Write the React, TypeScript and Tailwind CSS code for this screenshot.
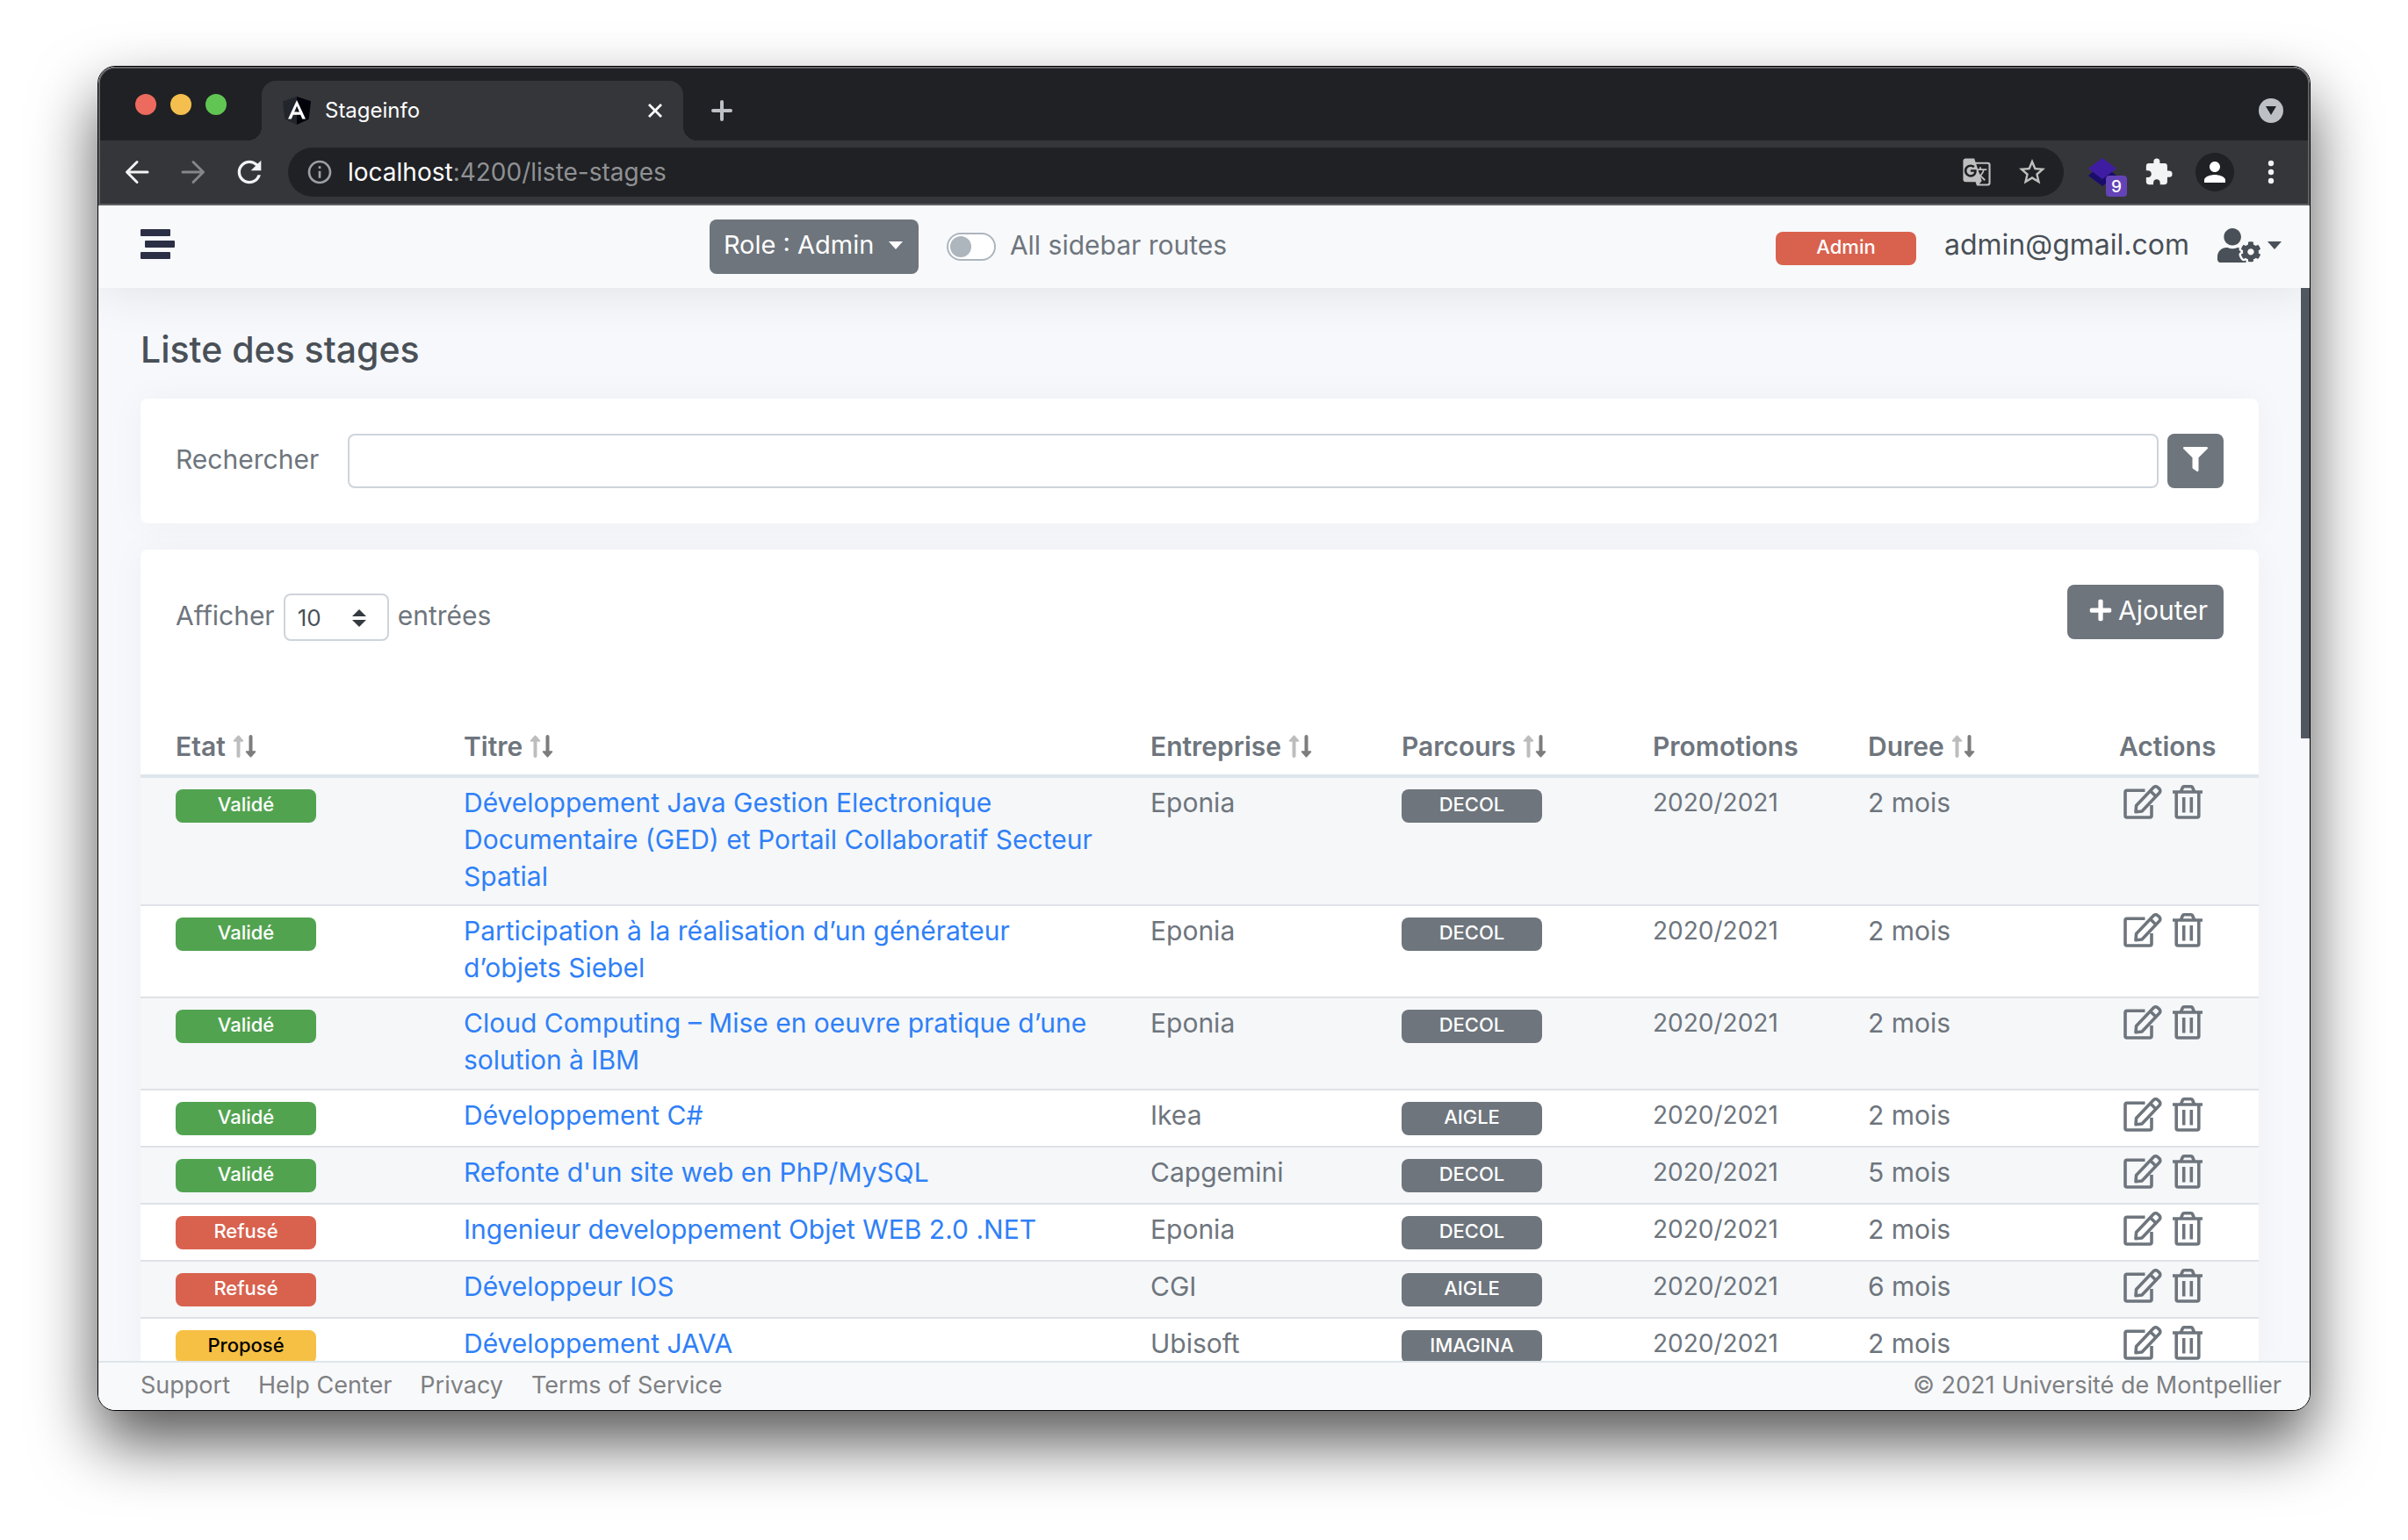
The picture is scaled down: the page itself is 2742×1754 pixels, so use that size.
import { useState } from "react";
import { FaFilter, FaPlus, FaUserCog } from "react-icons/fa";
import {
  MdExtension,
  MdGTranslate,
  MdInfoOutline,
  MdPerson,
  MdRefresh,
  MdStarBorder,
} from "react-icons/md";

type Etat = "Validé" | "Refusé" | "Proposé";

interface Stage {
  etat: Etat;
  titre: string;
  entreprise: string;
  parcours: string;
  duree: string;
  height: string;
}

const PROMOTION = "2020/2021";

const stages: Stage[] = [
  {
    etat: "Validé",
    titre:
      "Développement Java Gestion Electronique Documentaire (GED) et Portail Collaboratif Secteur Spatial",
    entreprise: "Eponia",
    parcours: "DECOL",
    duree: "2 mois",
    height: "h-[144px]",
  },
  {
    etat: "Validé",
    titre: "Participation à la réalisation d’un générateur d’objets Siebel",
    entreprise: "Eponia",
    parcours: "DECOL",
    duree: "2 mois",
    height: "h-[105px]",
  },
  {
    etat: "Validé",
    titre: "Cloud Computing – Mise en oeuvre pratique d’une solution à IBM",
    entreprise: "Eponia",
    parcours: "DECOL",
    duree: "2 mois",
    height: "h-[105px]",
  },
  { etat: "Validé", titre: "Développement C#", entreprise: "Ikea", parcours: "AIGLE", duree: "2 mois", height: "h-[65px]" },
  { etat: "Validé", titre: "Refonte d'un site web en PhP/MySQL", entreprise: "Capgemini", parcours: "DECOL", duree: "5 mois", height: "h-[65px]" },
  { etat: "Refusé", titre: "Ingenieur developpement Objet WEB 2.0 .NET", entreprise: "Eponia", parcours: "DECOL", duree: "2 mois", height: "h-[65px]" },
  { etat: "Refusé", titre: "Développeur IOS", entreprise: "CGI", parcours: "AIGLE", duree: "6 mois", height: "h-[65px]" },
  { etat: "Proposé", titre: "Développement JAVA", entreprise: "Ubisoft", parcours: "IMAGINA", duree: "2 mois", height: "h-[65px]" },
];

const etatColors: Record<Etat, string> = {
  Validé: "bg-[#52a350] text-white",
  Refusé: "bg-[#d9624e] text-white",
  Proposé: "bg-[#f6c044] text-black",
};

const columns = [
  { label: "Etat", sortable: true },
  { label: "Titre", sortable: true },
  { label: "Entreprise", sortable: true },
  { label: "Parcours", sortable: true },
  { label: "Promotions", sortable: false },
  { label: "Duree", sortable: true },
  { label: "Actions", sortable: false },
];

function Badge({ color, children }: { color: string; children: string }) {
  return (
    <span
      className={`flex h-[38px] w-40 items-center justify-center rounded-lg pb-1 text-[22px] leading-none font-medium ${color}`}
    >
      {children}
    </span>
  );
}

function Caret() {
  return (
    <svg width="16" height="9" viewBox="0 0 16 9" aria-hidden="true">
      <path d="M0 0h16L8 9z" fill="currentColor" />
    </svg>
  );
}

function SortArrows() {
  return (
    <svg width="27" height="26" viewBox="0 0 27 26" fill="none" strokeLinecap="round" strokeLinejoin="round" aria-hidden="true">
      <path d="M6.5 24V5" stroke="#bdbdbd" strokeWidth="4" />
      <path d="M6.500 1.500 11.300 6.800H1.700z" fill="#bdbdbd" stroke="#bdbdbd" strokeWidth="2" />
      <path d="M20.500 2v19" stroke="#7d7d7d" strokeWidth="4" />
      <path d="M20.500 24.500 15.700 19.200h9.600z" fill="#7d7d7d" stroke="#7d7d7d" strokeWidth="2" />
    </svg>
  );
}

function EditIcon() {
  return (
    <svg width="44" height="40" viewBox="0 0 44 40" fill="none" stroke="currentColor" strokeWidth="3.600" strokeLinecap="butt" strokeLinejoin="round" aria-hidden="true">
      <path d="M24.500 6.300H4a2 2 0 0 0-2 2V35a2 2 0 0 0 2 2h26a2 2 0 0 0 2-2V23" />
      <path d="M14 30.800l.6-7.300L34.300 2.800a3.300 3.300 0 0 1 4.700-.1l1.800 1.700a3.300 3.300 0 0 1 .1 4.700L21 30z" />
      <path d="M30.500 6.800l6.600 6.400" />
    </svg>
  );
}

function TrashIcon() {
  return (
    <svg width="34" height="40" viewBox="0 0 34 40" fill="none" stroke="currentColor" strokeWidth="3.600" strokeLinejoin="round" aria-hidden="true">
      <path d="M0 8h34" />
      <path d="M9.300 8l2-5a2 2 0 0 1 1.800-1.200h7.800a2 2 0 0 1 1.800 1.200l2 5" />
      <path d="M4.200 8v27a2 2 0 0 0 2 2h21.600a2 2 0 0 0 2-2V8" />
      <path d="M12.700 14v17.500M21.300 14v17.500" />
    </svg>
  );
}

function AngularLogo() {
  return (
    <svg width="32" height="32" viewBox="0 0 32 32" aria-hidden="true">
      <path d="M16 0L0 5.300l2.300 20.400L16 32z" fill="#23252d" />
      <path d="M16 0l16 5.300-2.300 20.400L16 32z" fill="#02030a" />
      <path d="M16 4L6 25.500h3.800l2-4.800h8.400l2 4.800H26L16 4zm0 6.800l2.900 6.800h-5.800z" fill="#fff" fillRule="evenodd" />
    </svg>
  );
}

function TabStrip() {
  return (
    <div className="flex h-[82px] items-center bg-[#202124] pr-7 pl-10">
      <div className="flex gap-4">
        <button aria-label="Close window" className="size-6 rounded-full bg-[#ed6a5e]" />
        <button aria-label="Minimize window" className="size-6 rounded-full bg-[#f5bf4f]" />
        <button aria-label="Zoom window" className="size-6 rounded-full bg-[#61c554]" />
      </div>
      <div className="relative ml-10 flex h-[68px] w-[480px] items-center self-end rounded-t-2xl bg-[#35363a] pr-4 pl-6 text-white">
        <span className="absolute bottom-0 -left-4 size-4 bg-[radial-gradient(circle_at_0_0,transparent_16px,#35363a_16px)]" />
        <span className="absolute -right-4 bottom-0 size-4 bg-[radial-gradient(circle_at_100%_0,transparent_16px,#35363a_16px)]" />
        <AngularLogo />
        <span className="ml-4 flex-1 text-[24px] leading-8">Stageinfo</span>
        <button aria-label="Close tab" className="flex size-8 items-center justify-center">
          <svg width="16" height="16" viewBox="0 0 16 16" stroke="currentColor" strokeWidth="2.800" aria-hidden="true">
            <path d="M1 1l14 14M15 1L1 15" />
          </svg>
        </button>
      </div>
      <button aria-label="New tab" className="ml-5 flex h-[68px] w-12 items-center justify-center self-end text-[#bdc1c6]">
        <svg width="24" height="24" viewBox="0 0 24 24" stroke="currentColor" strokeWidth="4" strokeLinecap="round" aria-hidden="true">
          <path d="M12 2v20M2 12h20" />
        </svg>
      </button>
      <button aria-label="Search tabs" className="ml-auto flex h-[68px] items-center self-end">
        <span className="flex size-7 items-center justify-center rounded-full bg-[#bdc1c6] text-[#202124]">
          <svg width="12" height="10" viewBox="0 0 12 10" aria-hidden="true">
            <path d="M0 0h12L6 10z" fill="currentColor" />
          </svg>
        </span>
      </button>
    </div>
  );
}

function AddressBar() {
  const tool = "flex h-14 w-16 items-center justify-center";
  return (
    <div className="flex items-center border-b-2 border-[#616265] bg-[#35363a] px-[10px] py-2 text-[#f1f3f4]">
      <button aria-label="Back" className={tool}>
        <svg width="28" height="28" viewBox="0 0 28 28" fill="none" stroke="currentColor" strokeWidth="3" strokeLinecap="round" strokeLinejoin="round" aria-hidden="true">
          <path d="M26 14H3M14 2.500L2.500 14 14 25.500" />
        </svg>
      </button>
      <button aria-label="Forward" className={`${tool} text-[#85868a]`}>
        <svg width="28" height="28" viewBox="0 0 28 28" fill="none" stroke="currentColor" strokeWidth="3" strokeLinecap="round" strokeLinejoin="round" aria-hidden="true">
          <path d="M2 14h23M14 2.500L25.500 14 14 25.500" />
        </svg>
      </button>
      <button aria-label="Reload" className={tool}>
        <MdRefresh size={40} />
      </button>
      <div className="mx-3 flex h-14 min-w-0 flex-1 items-center rounded-full bg-[#202124] pr-[18px] pl-5">
        <MdInfoOutline size={32} className="text-[#9aa0a6]" />
        <p className="ml-4 flex-1 text-[28px] leading-10 text-[#8f9194]">
          <span className="text-white">localhost</span>:4200/liste-stages
        </p>
        <button aria-label="Translate this page">
          <MdGTranslate size={34} className="text-[#bfbfbf]" />
        </button>
        <button aria-label="Bookmark this tab" className="ml-7">
          <MdStarBorder size={36} className="text-[#bfbfbf]" />
        </button>
      </div>
      <button aria-label="Extension, 9 notifications" className={`${tool} relative`}>
        <svg width="32" height="32" viewBox="0 0 32 32" aria-hidden="true">
          <path d="M0 20l6-5h20l6 5-16 12z" fill="#1a0c6b" />
          <path d="M16 0l16 12-16 12L0 12z" fill="#3f1da3" />
        </svg>
        <span className="absolute right-1 bottom-0 flex size-6 items-center justify-center rounded-sm bg-[#6443b8] text-[19px] leading-none font-medium text-white">
          9
        </span>
      </button>
      <button aria-label="Extensions" className={tool}>
        <MdExtension size={34} />
      </button>
      <button aria-label="Profile" className={tool}>
        <span className="flex size-11 items-center justify-center rounded-full bg-[#202124] text-white">
          <MdPerson size={36} />
        </span>
      </button>
      <button aria-label="Browser menu" className={tool}>
        <svg width="8" height="28" viewBox="0 0 8 28" fill="currentColor" aria-hidden="true">
          <circle cx="4" cy="4" r="3.200" />
          <circle cx="4" cy="14" r="3.200" />
          <circle cx="4" cy="24" r="3.200" />
        </svg>
      </button>
    </div>
  );
}

function NavBar() {
  const [allRoutes, setAllRoutes] = useState(false);
  return (
    <header className="relative z-10 flex h-[94px] shrink-0 items-center justify-between bg-[#f8f9fb] pr-8 pl-12 text-[#495057] shadow-[0_0_60px_rgba(0,0,0,0.1)]">
      <button aria-label="Toggle sidebar" className="pb-1">
        <svg width="39" height="36" viewBox="0 0 39 36" fill="#2b2f45" aria-hidden="true">
          <rect x="0" y="0" width="34" height="8" rx="1" />
          <rect x="5" y="13" width="34" height="8" rx="1" />
          <rect x="0" y="26" width="34" height="8" rx="1" />
        </svg>
      </button>
      <div className="flex items-center pr-4">
        <button className="flex h-[62px] w-[238px] items-center justify-between rounded-lg bg-[#6e757d] pr-[18px] pb-1 pl-4 text-[29px] text-white">
          Role : Admin
          <Caret />
        </button>
        <label className="ml-8 flex cursor-pointer items-center text-[#6e757d]">
          <input
            type="checkbox"
            role="switch"
            checked={allRoutes}
            onChange={(e) => setAllRoutes(e.target.checked)}
            className="peer sr-only"
          />
          <span className="flex h-8 w-14 items-center rounded-full border-2 border-[#adb5bd] bg-white px-[2px] peer-checked:justify-end">
            <span className="size-6 rounded-full bg-[#adb5bd]" />
          </span>
          <span className="ml-4 pb-1 text-[30px]">All sidebar routes</span>
        </label>
      </div>
      <div className="flex items-center">
        <div className="pt-1">
          <Badge color="bg-[#d9624e] text-white">Admin</Badge>
        </div>
        <span className="ml-8 pb-1 text-[32px]">admin@gmail.com</span>
        <button aria-label="Account settings" className="ml-8 flex items-center gap-2 pb-1">
          <FaUserCog size={49} />
          <Caret />
        </button>
      </div>
    </header>
  );
}

function SearchCard() {
  return (
    <section className="flex items-center rounded-lg bg-white p-10 shadow-[0_0_40px_rgba(0,0,0,0.04)]">
      <label htmlFor="search" className="w-[196px] pb-1 text-[30px]">
        Rechercher
      </label>
      <input
        id="search"
        type="text"
        className="h-[62px] min-w-0 flex-1 rounded-lg border-2 border-[#ced4da] bg-white px-4 text-[30px]"
      />
      <button aria-label="Filtrer" className="ml-[10px] flex h-[62px] w-16 items-center justify-center rounded-lg bg-[#6e757d] pb-1 text-white">
        <FaFilter size={28} />
      </button>
    </section>
  );
}

function StagesCard() {
  return (
    <section className="mt-[30px] rounded-t-lg bg-white shadow-[0_0_40px_rgba(0,0,0,0.04)]">
      <div className="flex items-start justify-between px-10 pt-10">
        <div className="flex items-center gap-[10px] pt-[10px] text-[30px]">
          <label htmlFor="page-size" className="pb-1">
            Afficher
          </label>
          <div className="relative">
            <select
              id="page-size"
              defaultValue="10"
              className="block h-[54px] w-[120px] appearance-none rounded-lg border-2 border-[#ced4da] bg-white pl-[14px] text-[26px] text-[#495057]"
            >
              <option>10</option>
              <option>25</option>
              <option>50</option>
            </select>
            <svg width="16" height="20" viewBox="0 0 16 20" fill="#343a40" className="pointer-events-none absolute top-[18px] right-[26px]" aria-hidden="true">
              <path d="M8 0l8 8H0zM8 20l8-8H0z" />
            </svg>
          </div>
          <span className="pb-1">entrées</span>
        </div>
        <button className="flex h-[62px] w-[178px] items-center justify-end gap-[6px] rounded-lg bg-[#6e757d] pr-[18px] pb-1 text-[30px] text-white">
          <FaPlus size={28} />
          Ajouter
        </button>
      </div>
      <table className="mt-[90px] w-full table-fixed border-separate border-spacing-0 text-left text-[30px] leading-[42px]">
        <colgroup>
          <col className="w-[368px]" />
          <col />
          <col className="w-[286px]" />
          <col className="w-[286px]" />
          <col className="w-[245px]" />
          <col className="w-[286px]" />
          <col className="w-[159px]" />
        </colgroup>
        <thead>
          <tr>
            {columns.map((c) => (
              <th key={c.label} scope="col" className="h-[66px] border-b-4 border-[#dee6eb] p-0 pb-[2px] font-semibold first:pl-10">
                {c.sortable ? (
                  <button className="flex items-center gap-2">
                    {c.label}
                    <SortArrows />
                  </button>
                ) : (
                  c.label
                )}
              </th>
            ))}
          </tr>
        </thead>
        <tbody className="[&>tr:nth-child(odd)]:bg-[#f5f7f9] [&>tr+tr>td]:border-t-2 [&>tr>td]:border-[#dee2e6] [&>tr>td]:p-0 [&>tr>td]:pt-[7px] [&>tr>td]:align-top [&>tr>td:first-child]:pl-10">
          {stages.map((s) => (
            <tr key={s.titre} className={s.height}>
              <td>
                <div className="pt-[6px]">
                  <Badge color={etatColors[s.etat]}>{s.etat}</Badge>
                </div>
              </td>
              <td>
                <a href="#stage" className="block pr-12 text-[#2f80f7]">
                  {s.titre}
                </a>
              </td>
              <td>{s.entreprise}</td>
              <td>
                <div className="pt-[6px]">
                  <Badge color="bg-[#6e757d] text-white">{s.parcours}</Badge>
                </div>
              </td>
              <td className="text-[28px]">{PROMOTION}</td>
              <td>{s.duree}</td>
              <td>
                <div className="flex gap-3 pt-[1px] pl-[5px]">
                  <button aria-label="Modifier">
                    <EditIcon />
                  </button>
                  <button aria-label="Supprimer">
                    <TrashIcon />
                  </button>
                </div>
              </td>
            </tr>
          ))}
        </tbody>
      </table>
    </section>
  );
}

function Footer() {
  return (
    <footer className="flex h-14 shrink-0 items-center justify-between border-t-2 border-[#dee6eb] bg-[#f8f9fb] pr-8 pb-[2px] pl-12 text-[27px] text-[#7e8082]">
      <nav className="flex gap-8">
        <a href="#support">Support</a>
        <a href="#help">Help Center</a>
        <a href="#privacy">Privacy</a>
        <a href="#terms">Terms of Service</a>
      </nav>
      <span>© 2021 Université de Montpellier</span>
    </footer>
  );
}

export default function App() {
  return (
    <div className="h-screen bg-white px-[111px] pt-[75px] pb-[147px] font-['Inter',sans-serif]">
      <div className="flex h-full flex-col overflow-hidden rounded-[20px] border border-black bg-[#f6f8fc] shadow-[0_36px_72px_rgba(0,0,0,0.66)]">
        <div className="relative z-20 shrink-0 overflow-hidden rounded-t-[19px] border-x-2 border-t-2 border-[#616265] bg-[#202124]">
          <TabStrip />
          <AddressBar />
        </div>
        <NavBar />
        <main className="flex min-h-0 flex-1 overflow-hidden text-[#6e757d]">
          <div className="min-w-0 flex-1 px-12 pt-[46px]">
            <h1 className="mb-8 text-[41px] leading-[48px] font-medium text-[#495057]">Liste des stages</h1>
            <SearchCard />
            <StagesCard />
          </div>
          <div className="z-20 w-[10px]">
            <div className="h-[42%] bg-[#505760]" />
          </div>
        </main>
        <Footer />
      </div>
    </div>
  );
}
